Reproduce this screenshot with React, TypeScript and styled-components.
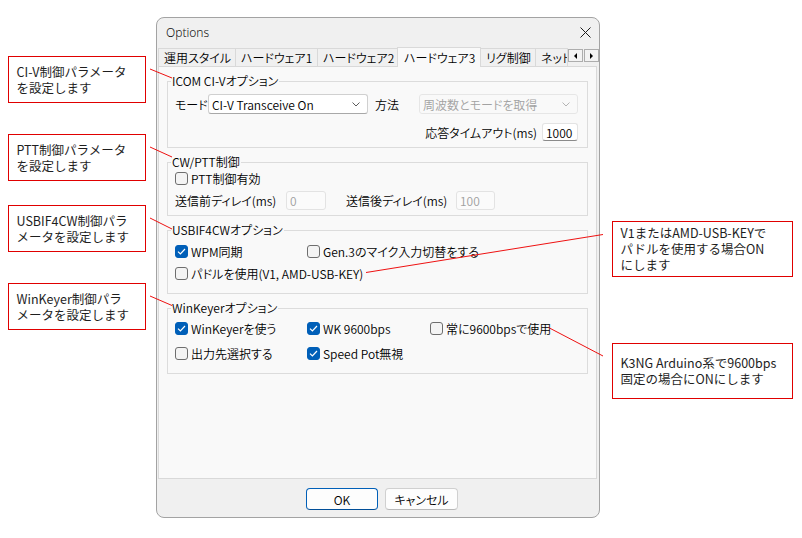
import React from 'react';
import styled, { createGlobalStyle } from 'styled-components';

const GlobalStyle = createGlobalStyle`
  html, body {
    margin: 0;
    padding: 0;
    background: #ffffff;
  }
  body {
    font-family: "Noto Sans CJK JP", "Noto Sans", sans-serif;
    color: #000;
  }
`;

const UI_FONT = `"Noto Sans CJK JP", "Noto Sans", sans-serif`;

const Page = styled.div`
  position: relative;
  width: 802px;
  height: 538px;
  display: flex;
  align-items: flex-start;
  overflow: hidden;
`;

const NoteColumn = styled.div<{ $ml: number; $w: number }>`
  margin-left: ${(p) => p.$ml}px;
  width: ${(p) => p.$w}px;
  display: flex;
  flex-direction: column;
  flex: none;
`;

const Callout = styled.div<{ $top: number; $h: number }>`
  margin-top: ${(p) => p.$top}px;
  height: ${(p) => p.$h}px;
  box-sizing: border-box;
  border: 1.5px solid #e00000;
  padding-left: 7.5px;
  display: flex;
  align-items: center;
  font-family: ${UI_FONT};
  font-size: 12.5px;
  line-height: 16px;
  color: #1e1e1e;
  white-space: nowrap;
`;

const Leaders = styled.svg`
  position: absolute;
  left: 0;
  top: 0;
  pointer-events: none;
`;

const Dialog = styled.div`
  margin-left: 10px;
  margin-top: 17px;
  width: 444px;
  height: 501px;
  box-sizing: border-box;
  border: 1px solid #a3a3a3;
  border-radius: 8px;
  background: #f0f0f0;
  display: flex;
  flex-direction: column;
  overflow: hidden;
  flex: none;
  font-family: ${UI_FONT};
  font-feature-settings: "palt";
  font-size: 12px;
  font-weight: 350;
`;

const TitleBar = styled.div`
  height: 29px;
  flex: none;
  display: flex;
  align-items: center;
  justify-content: space-between;
  padding: 0 8px 0 9px;
  font-family: "Noto Sans", "Open Sans", sans-serif;
  font-size: 12px;
  color: #111;
`;

const Body = styled.div`
  padding: 0 2px 0 1px;
  display: flex;
  flex-direction: column;
`;

const TabStrip = styled.div`
  height: 19px;
  display: flex;
  align-items: flex-end;
  margin-right: -1px;
`;

const Tab = styled.div<{ $w: number; $active?: boolean }>`
  width: ${(p) => p.$w}px;
  height: ${(p) => (p.$active ? 20 : 18)}px;
  margin-bottom: ${(p) => (p.$active ? -1 : 0)}px;
  flex: none;
  box-sizing: border-box;
  border: 1px solid #d9d9d9;
  border-bottom: none;
  background: ${(p) => (p.$active ? '#f9f9f9' : '#f0f0f0')};
  padding-left: ${(p) => (p.$active ? 6 : 5)}px;
  display: flex;
  align-items: center;
  white-space: nowrap;
  overflow: hidden;
  position: relative;
  z-index: ${(p) => (p.$active ? 1 : 0)};
  color: #000;

  & + & {
    margin-left: -1px;
  }
`;

const ScrollPair = styled.div`
  display: flex;
  margin-left: auto;
  margin-bottom: 4px;
  flex: none;
`;

const ScrollButton = styled.div`
  width: 15px;
  height: 13px;
  box-sizing: border-box;
  border: 1px solid #adadad;
  background: #f3f3f3;
  display: flex;
  align-items: center;
  justify-content: center;

  & + & {
    margin-left: 1px;
  }
`;

const Arrow = styled.span<{ $dir: 'left' | 'right' }>`
  width: 0;
  height: 0;
  border-top: 3px solid transparent;
  border-bottom: 3px solid transparent;
  ${(p) =>
    p.$dir === 'left'
      ? 'border-right: 3px solid #000;'
      : 'border-left: 3px solid #000;'}
`;

const Panel = styled.div`
  height: 413px;
  box-sizing: border-box;
  border: 1px solid #d9d9d9;
  background: #f9f9f9;
  padding: 7px 8px 0 8px;
  display: flex;
  flex-direction: column;
  gap: 7px;
`;

const Group = styled.fieldset<{ $h: number }>`
  margin: 0;
  height: ${(p) => p.$h}px;
  box-sizing: border-box;
  border: 1px solid #dcdcdc;
  padding: 0 9px 0 7px;
  min-width: 0;
`;

const Legend = styled.legend`
  margin-left: -4px;
  padding: 0 1px;
  font-size: 12px;
  line-height: 14px;
  color: #000;
`;

const Row = styled.div<{ $mt: number; $h: number; $end?: boolean }>`
  display: flex;
  align-items: center;
  justify-content: ${(p) => (p.$end ? 'flex-end' : 'flex-start')};
  margin-top: ${(p) => p.$mt}px;
  height: ${(p) => p.$h}px;
`;

const Label = styled.span<{ $w?: number; $ml?: number }>`
  ${(p) => (p.$w ? `width: ${p.$w}px;` : '')}
  margin-left: ${(p) => p.$ml || 0}px;
  flex: none;
  white-space: nowrap;
  color: #000;
`;

const Combo = styled.div<{ $w: number; $disabled?: boolean }>`
  width: ${(p) => p.$w}px;
  height: 20px;
  box-sizing: border-box;
  flex: none;
  border: 1px solid ${(p) => (p.$disabled ? '#e6e6e6' : '#d0d0d0')};
  border-bottom-color: ${(p) => (p.$disabled ? '#e6e6e6' : '#a8a8a8')};
  border-radius: 3px;
  background: ${(p) => (p.$disabled ? '#f9f9f9' : '#ffffff')};
  color: ${(p) => (p.$disabled ? '#a2a2a2' : '#000')};
  display: flex;
  align-items: center;
  justify-content: space-between;
  padding: 0 7px 0 3px;
  white-space: nowrap;
`;

const TextBox = styled.input<{ $w: number; $ml?: number }>`
  width: ${(p) => p.$w}px;
  height: ${(p) => (p.disabled ? 19 : 18)}px;
  margin: 0 0 0 ${(p) => p.$ml || 0}px;
  box-sizing: border-box;
  flex: none;
  border: 1px solid #e3e3e3;
  border-bottom-color: ${(p) => (p.disabled ? '#e3e3e3' : '#8a8a8a')};
  border-radius: 3px;
  background: ${(p) => (p.disabled ? '#fbfbfb' : '#ffffff')};
  color: ${(p) => (p.disabled ? '#a0a0a0' : '#000')};
  padding: 0 3px;
  font-family: ${UI_FONT};
  font-feature-settings: "palt";
  font-size: 12px;
  font-weight: 350;
  outline: none;
`;

const CheckWrap = styled.label<{ $w?: number }>`
  ${(p) => (p.$w ? `width: ${p.$w}px;` : '')}
  flex: none;
  display: flex;
  align-items: center;
  gap: 3px;
  white-space: nowrap;
  color: #000;
`;

const CheckBox = styled.span<{ $on?: boolean }>`
  width: 13px;
  height: 13px;
  box-sizing: border-box;
  border-radius: 3px;
  border: 1px solid ${(p) => (p.$on ? '#005fb8' : '#6e6e6e')};
  background: ${(p) => (p.$on ? '#005fb8' : '#f4f4f4')};
  display: flex;
  align-items: center;
  justify-content: center;
  flex: none;
`;

const Footer = styled.div`
  flex: 1;
  display: flex;
  align-items: flex-start;
  padding: 9px 0 0 149px;
  gap: 7px;
`;

const DialogButton = styled.div<{ $w: number; $default?: boolean }>`
  width: ${(p) => p.$w}px;
  height: 22px;
  box-sizing: border-box;
  border: 1px solid ${(p) => (p.$default ? '#005fb8' : '#d0d0d0')};
  border-bottom-color: ${(p) => (p.$default ? '#004e98' : '#b8b8b8')};
  border-radius: 4px;
  background: #fdfdfd;
  display: flex;
  align-items: center;
  justify-content: center;
  color: #000;
`;

const Chevron = ({ color }: { color: string }) => (
  <svg width="8" height="5" viewBox="0 0 8 5">
    <polyline points="0.5,0.5 4,4 7.5,0.5" fill="none" stroke={color} strokeWidth="1" />
  </svg>
);

const Check = ({ on, label, w }: { on?: boolean; label: string; w?: number }) => (
  <CheckWrap $w={w}>
    <CheckBox $on={on}>
      {on && (
        <svg width="9" height="7" viewBox="0 0 9 7">
          <polyline points="1,3.6 3.4,6 8,1" fill="none" stroke="#fff" strokeWidth="1.2" />
        </svg>
      )}
    </CheckBox>
    {label}
  </CheckWrap>
);

const tabs = [
  { label: '運用スタイル', w: 78 },
  { label: 'ハードウェア1', w: 83 },
  { label: 'ハードウェア2', w: 81 },
  { label: 'ハードウェア3', w: 84, active: true },
  { label: 'リグ制御', w: 56 },
  { label: 'ネットワーク', w: 33 },
];

const leaderLines = [
  [150, 69, 172, 78],
  [150, 147, 172, 157],
  [150, 218, 172, 229],
  [150, 296, 172, 305.5],
  [366, 272.5, 603, 234.5],
  [548.5, 327.5, 603, 356],
];

export default function App() {
  return (
    <Page>
      <GlobalStyle />

      <NoteColumn $ml={8} $w={138}>
        <Callout $top={56} $h={47}>
          CI-V制御パラメータ
          <br />
          を設定します
        </Callout>
        <Callout $top={31} $h={47}>
          PTT制御パラメータ
          <br />
          を設定します
        </Callout>
        <Callout $top={24} $h={47}>
          USBIF4CW制御パラ
          <br />
          メータを設定します
        </Callout>
        <Callout $top={31} $h={47}>
          WinKeyer制御パラ
          <br />
          メータを設定します
        </Callout>
      </NoteColumn>

      <Dialog>
        <TitleBar>
          <span>Options</span>
          <svg width="11" height="11" viewBox="0 0 11 11">
            <path d="M0.5 0.5 L10.5 10.5 M10.5 0.5 L0.5 10.5" stroke="#1b1b1b" strokeWidth="1" />
          </svg>
        </TitleBar>

        <Body>
          <TabStrip>
            {tabs.map((t) => (
              <Tab key={t.label} $w={t.w} $active={t.active}>
                {t.label}
              </Tab>
            ))}
            <ScrollPair>
              <ScrollButton>
                <Arrow $dir="left" />
              </ScrollButton>
              <ScrollButton>
                <Arrow $dir="right" />
              </ScrollButton>
            </ScrollPair>
          </TabStrip>

          <Panel>
            <Group $h={74}>
              <Legend>ICOM CI-Vオプション</Legend>
              <Row $mt={6} $h={20}>
                <Label $w={33}>モード</Label>
                <Combo $w={160}>
                  <span>CI-V Transceive On</span>
                  <Chevron color="#5c5c5c" />
                </Combo>
                <Label $w={44} $ml={7}>
                  方法
                </Label>
                <Combo $w={159} $disabled>
                  <span>周波数とモードを取得</span>
                  <Chevron color="#b4b4b4" />
                </Combo>
              </Row>
              <Row $mt={9} $h={18} $end>
                <Label>応答タイムアウト(ms)</Label>
                <TextBox $w={36} $ml={5} readOnly defaultValue="1000" />
              </Row>
            </Group>

            <Group $h={61}>
              <Legend>CW/PTT制御</Legend>
              <Row $mt={0} $h={18}>
                <Check label="PTT制御有効" />
              </Row>
              <Row $mt={4} $h={19}>
                <Label $w={111}>送信前ディレイ(ms)</Label>
                <TextBox $w={40} disabled defaultValue="0" />
                <Label $w={110} $ml={20}>
                  送信後ディレイ(ms)
                </Label>
                <TextBox $w={39} disabled defaultValue="100" />
              </Row>
            </Group>

            <Group $h={71}>
              <Legend>USBIF4CWオプション</Legend>
              <Row $mt={5} $h={18}>
                <Check on label="WPM同期" w={132} />
                <Check label="Gen.3のマイク入力切替をする" />
              </Row>
              <Row $mt={4} $h={18}>
                <Check label="パドルを使用(V1, AMD-USB-KEY)" />
              </Row>
            </Group>

            <Group $h={73}>
              <Legend>WinKeyerオプション</Legend>
              <Row $mt={4} $h={18}>
                <Check on label="WinKeyerを使う" w={132} />
                <Check on label="WK 9600bps" w={123} />
                <Check label="常に9600bpsで使用" />
              </Row>
              <Row $mt={7} $h={18}>
                <Check label="出力先選択する" w={132} />
                <Check on label="Speed Pot無視" />
              </Row>
            </Group>
          </Panel>
        </Body>

        <Footer>
          <DialogButton $w={72} $default>
            OK
          </DialogButton>
          <DialogButton $w={73}>キャンセル</DialogButton>
        </Footer>
      </Dialog>

      <NoteColumn $ml={12} $w={181}>
        <Callout $top={221} $h={56}>
          V1またはAMD-USB-KEYで
          <br />
          パドルを使用する場合ON
          <br />
          にします
        </Callout>
        <Callout $top={66} $h={56}>
          K3NG Arduino系で9600bps
          <br />
          固定の場合にONにします
        </Callout>
      </NoteColumn>

      <Leaders width="802" height="538" viewBox="0 0 802 538">
        {leaderLines.map(([x1, y1, x2, y2], i) => (
          <line key={i} x1={x1} y1={y1} x2={x2} y2={y2} stroke="#ee1111" strokeWidth="1" />
        ))}
      </Leaders>
    </Page>
  );
}
